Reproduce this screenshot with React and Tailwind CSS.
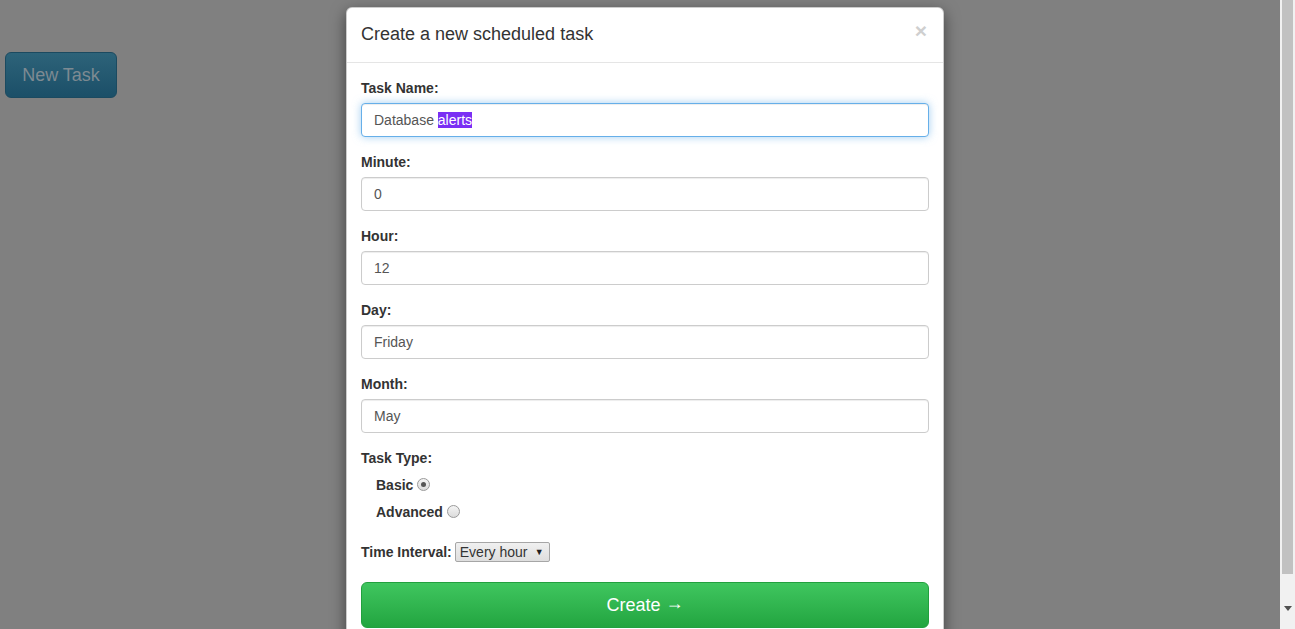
import React from "react";

function Field({ label, value, focused }) {
  return (
    <div className="mb-[15px]">
      <div className="mb-[5px] text-[14px] font-bold leading-[20px] text-[#333]">{label}</div>
      <div
        className={
          "flex h-[34px] items-center rounded-[4px] border bg-white px-[12px] text-[14px] text-[#555] " +
          (focused
            ? "border-[#66afe9] shadow-[inset_0_1px_1px_rgba(0,0,0,0.075),0_0_8px_rgba(102,175,233,0.6)]"
            : "border-[#ccc] shadow-[inset_0_1px_1px_rgba(0,0,0,0.075)]")
        }
      >
        {value}
      </div>
    </div>
  );
}

function Radio({ checked }) {
  return (
    <span className="ml-[4px] inline-flex h-[13px] w-[13px] -translate-y-[2px] items-center justify-center rounded-full border border-[#9a9a9a] bg-gradient-to-b from-[#f4f4f4] to-[#dcdcdc] align-middle">
      {checked && <span className="h-[5px] w-[5px] rounded-full bg-[#555]" />}
    </span>
  );
}

export default function App() {
  return (
    <div className="flex h-[629px] overflow-hidden font-['Liberation_Sans',Arial,sans-serif]">
      <div className="relative flex-1 bg-[#808080]">
        <div className="pl-[5px] pt-[52px]">
          <div className="inline-flex h-[46px] w-[112px] items-center justify-center rounded-[6px] border border-[#1b4a60] bg-gradient-to-b from-[#2d6379] to-[#1b4f68] text-[18px] text-[#7d8a92]">
            New Task
          </div>
        </div>

        <div className="absolute left-[346px] top-[7px] w-[598px] rounded-[6px] border border-black/20 bg-white shadow-[0_5px_15px_rgba(0,0,0,0.5)]">
          <div className="flex items-start justify-between border-b border-[#e5e5e5] px-[14px] pb-[15px] pt-[13px]">
            <div className="text-[18px] leading-[26px] text-[#333]">Create a new scheduled task</div>
            <div className="mr-[2px] -mt-[1px] text-[21px] font-bold leading-[21px] text-[#cfcfcf]">×</div>
          </div>
          <div className="px-[14px] pb-[15px] pt-[15px]">
            <Field
              label="Task Name:"
              focused
              value={
                <span>
                  Database <span className="bg-[#7a2ff4] text-white">alerts</span>
                </span>
              }
            />
            <Field label="Minute:" value="0" />
            <Field label="Hour:" value="12" />
            <Field label="Day:" value="Friday" />
            <Field label="Month:" value="May" />

            <div className="text-[14px] font-bold leading-[20px] text-[#333]">Task Type:</div>
            <div className="mt-[7px] pl-[15px] text-[14px] font-bold leading-[20px] text-[#333]">
              <div>
                Basic
                <Radio checked />
              </div>
              <div className="mt-[7px]">
                Advanced
                <Radio />
              </div>
            </div>

            <div className="mt-[20px] flex items-center text-[14px] leading-[20px] text-[#333]">
              <span className="font-bold">Time Interval:</span>
              <span className="ml-[3px] inline-flex h-[20px] w-[95px] items-center justify-between rounded-[2px] border border-[#a6a6a6] bg-gradient-to-b from-[#f0f0f0] to-[#dedede] pl-[4px] pr-[5px] text-[14px] text-[#333]">
                <span>Every hour</span>
                <span className="text-[9px] text-[#222]">▼</span>
              </span>
            </div>

            <div className="mt-[20px] flex h-[46px] items-center justify-center rounded-[6px] border border-[#22a03e] bg-gradient-to-b from-[#3fc65f] to-[#22a540] text-[18px] text-white">
              <span>Create</span>
              <span className="ml-[5px] -translate-y-[2px]">→</span>
            </div>
          </div>
        </div>
      </div>

      <div className="flex w-[15px] flex-col bg-[#f1f1f1]">
        <div className="mx-[2px] h-[574px] bg-[#c1c1c1]" />
        <div className="flex flex-1 items-center justify-center pt-[14px]">
          <svg width="8" height="5" viewBox="0 0 8 5">
            <path d="M0 0 L8 0 L4 5 Z" fill="#505050" />
          </svg>
        </div>
      </div>
    </div>
  );
}
